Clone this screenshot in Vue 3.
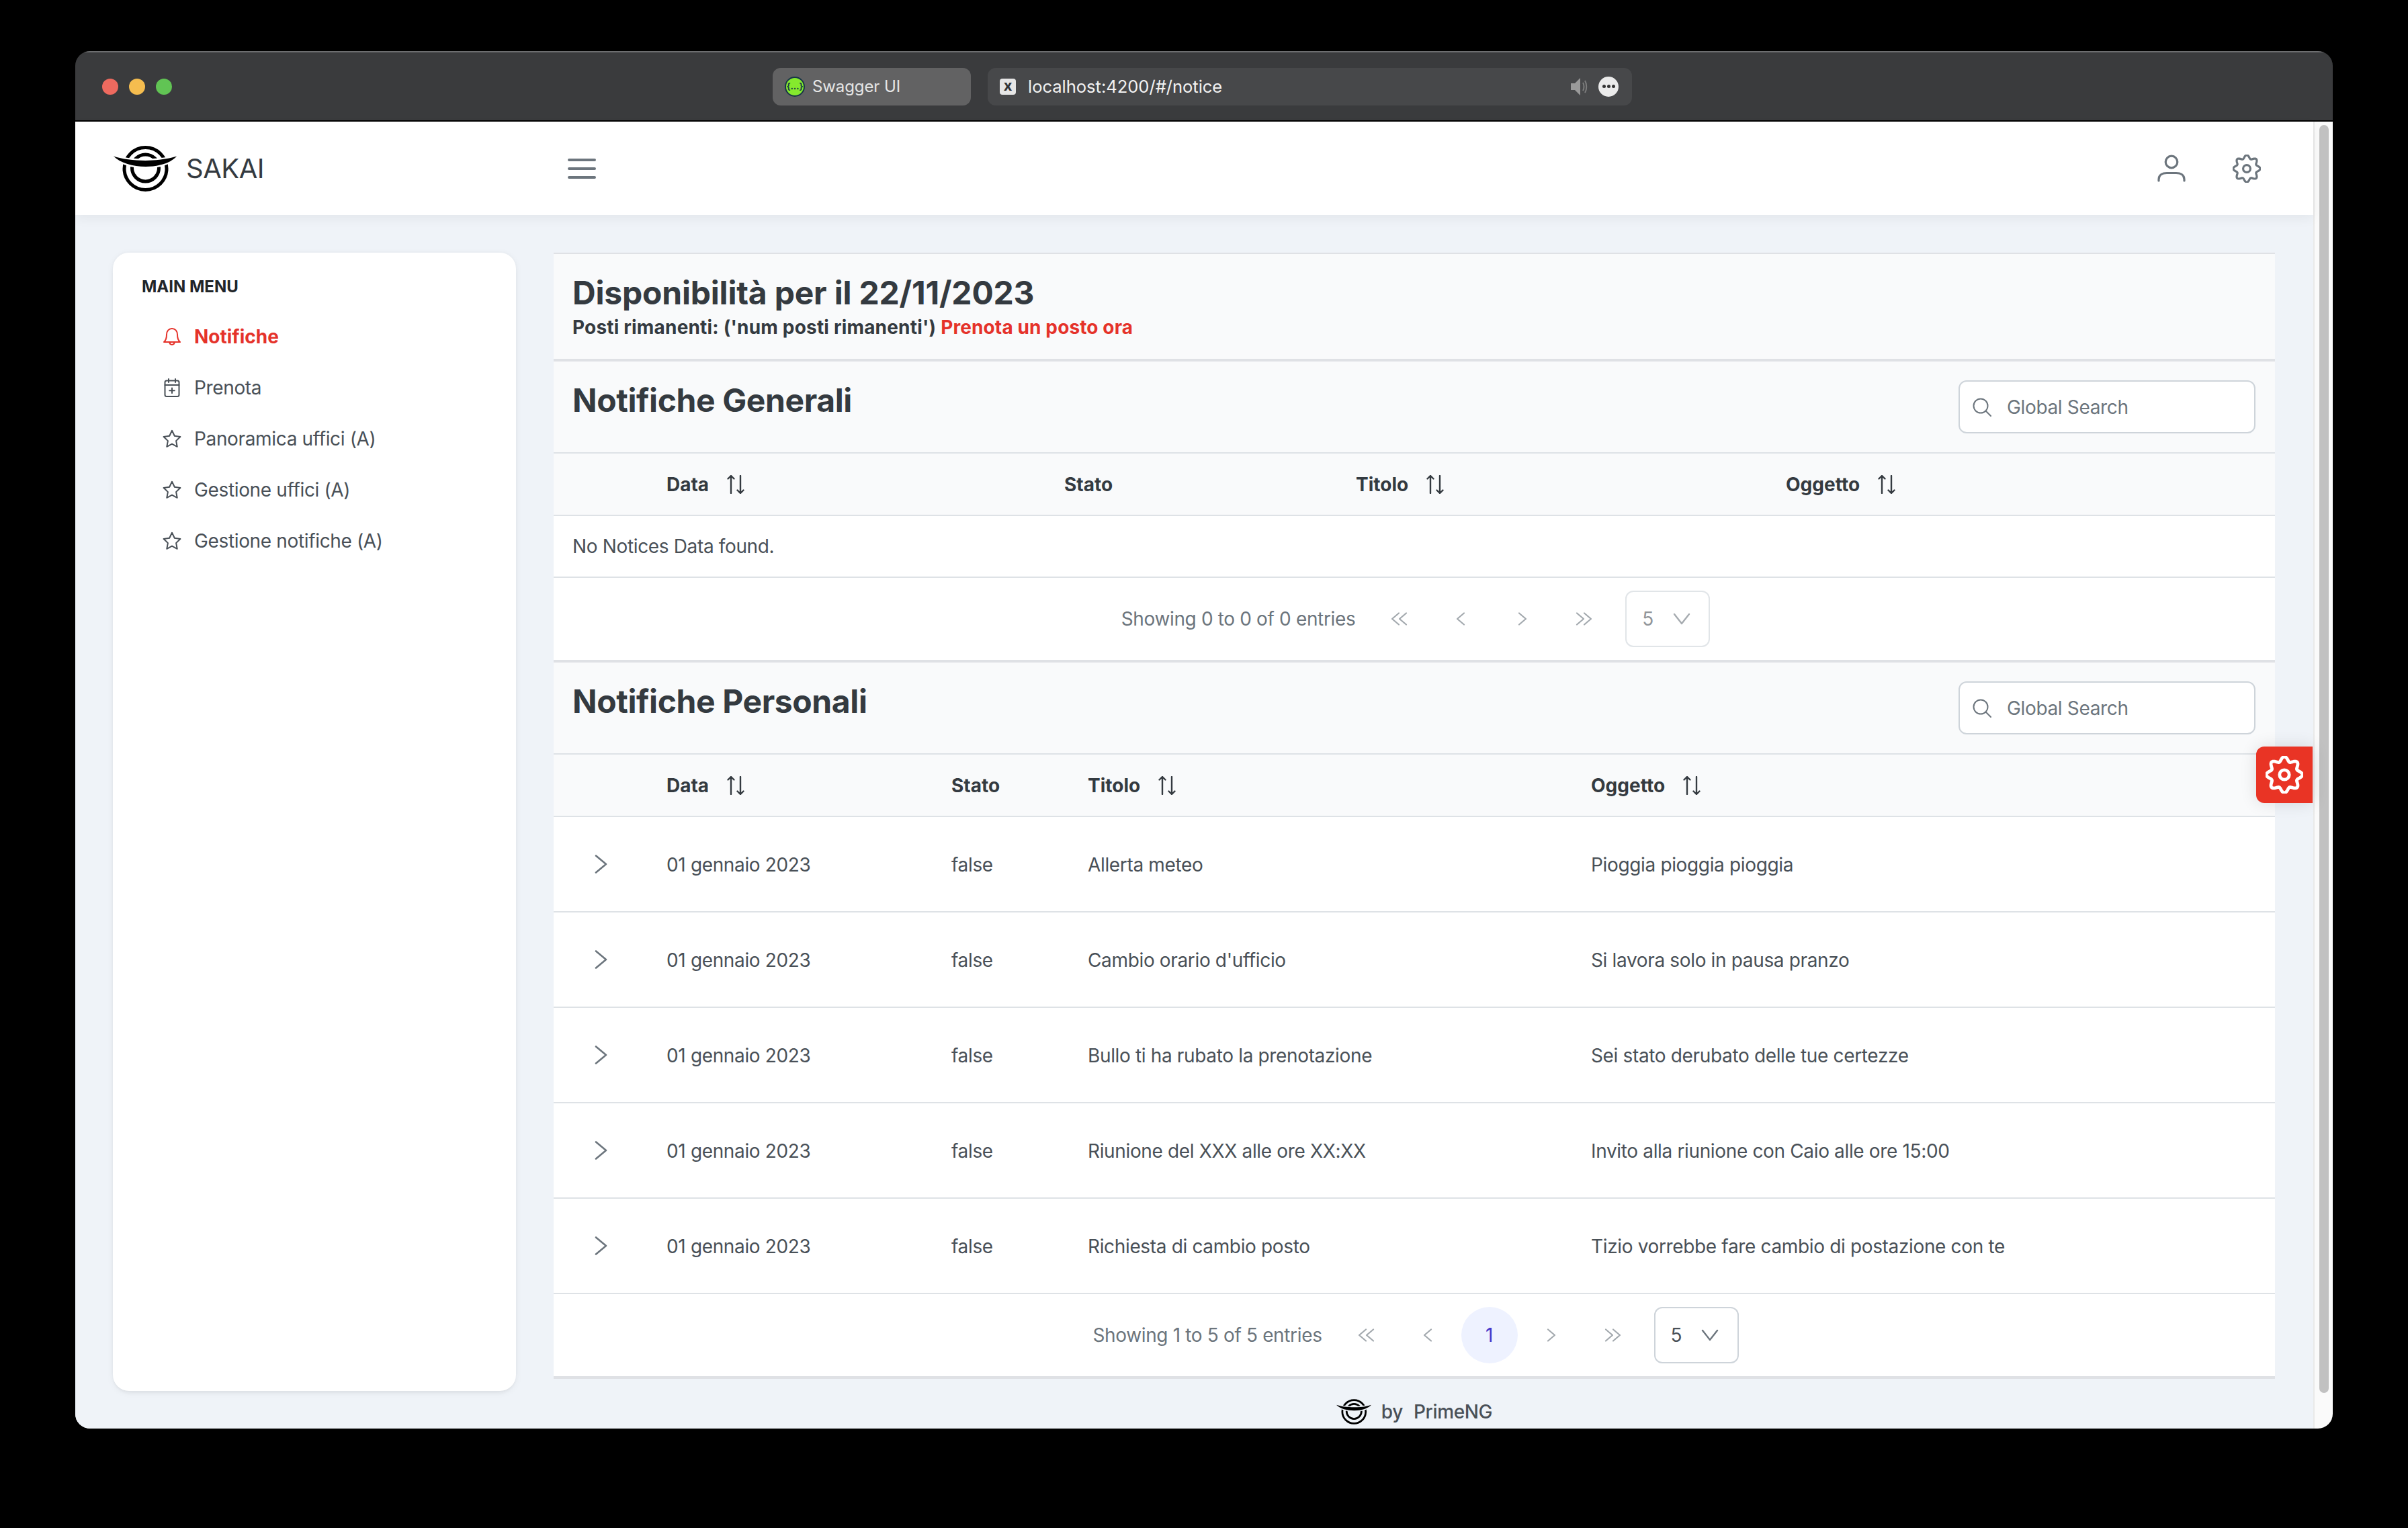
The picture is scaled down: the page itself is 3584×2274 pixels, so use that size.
<template>
  <div class="screen">
    <!-- shared icons -->
    <svg class="defs" aria-hidden="true">
      <symbol id="i-logo" viewBox="0 0 94 68">
        <circle class="ring" cx="47.5" cy="34" r="31.5" />
        <circle class="ring" cx="47.5" cy="33" r="20" />
        <path class="smile" d="M0 15.5 C25 24 70 24 94 15.5 C76 36 20 36 0 15.5Z" />
      </symbol>
      <symbol id="i-gear" viewBox="0 0 42 42">
        <path :d="gearPath" />
        <circle cx="21" cy="21" r="5.4" />
      </symbol>
      <symbol id="i-user" viewBox="0 0 42 42">
        <circle cx="21" cy="11" r="8.8" />
        <path d="M2 39 V37 C2 30 8 27.5 14 27.5 H28 C34 27.5 40 30 40 37 V39" />
      </symbol>
      <symbol id="i-bell" viewBox="0 0 28 28">
        <path d="M2 22 C5 19.5 6 16 6 11 C6 5.5 9.5 2 14 2 C18.5 2 22 5.5 22 11 C22 16 23 19.5 26 22 Z" />
        <path d="M10.5 22.5 C10.5 27 17.5 27 17.5 22.5" />
      </symbol>
      <symbol id="i-cal" viewBox="0 0 28 28">
        <rect x="3.5" y="3.5" width="21" height="23.5" rx="2.5" />
        <path d="M3.5 10 H24.5 M9 1 V6 M19 1 V6 M14 14.5 V22 M10.2 18.2 H17.8" />
      </symbol>
      <symbol id="i-star" viewBox="0 0 28 28">
        <path d="M14 1.8 L17.8 9.8 L26.4 11 L20.1 17.1 L21.7 25.8 L14 21.6 L6.3 25.8 L7.9 17.1 L1.6 11 L10.2 9.8 Z" />
      </symbol>
      <symbol id="i-sort" viewBox="0 0 28 28">
        <path d="M7 27 V1 M2.5 5.5 L7 1 L11.5 5.5 M21 1 V27 M16.5 22.5 L21 27 L25.5 22.5" />
      </symbol>
      <symbol id="i-search" viewBox="0 0 28 28">
        <circle cx="12" cy="12" r="10.5" />
        <path d="M19.5 19.5 L27 27" />
      </symbol>
      <symbol id="i-expand" viewBox="0 0 28 28">
        <path d="M6 1.5 L21 14 L6 26.5" />
      </symbol>
      <symbol id="i-right" viewBox="0 0 28 28">
        <path d="M9 5.5 L19 14 L9 22.5" />
      </symbol>
      <symbol id="i-left" viewBox="0 0 28 28">
        <path d="M19 5.5 L9 14 L19 22.5" />
      </symbol>
      <symbol id="i-dleft" viewBox="0 0 28 28">
        <path d="M14 5.5 L4 14 L14 22.5 M25 5.5 L15 14 L25 22.5" />
      </symbol>
      <symbol id="i-dright" viewBox="0 0 28 28">
        <path d="M3 5.5 L13 14 L3 22.5 M14 5.5 L24 14 L14 22.5" />
      </symbol>
      <symbol id="i-down" viewBox="0 0 28 28">
        <path d="M3 7 L14 21 L25 7" />
      </symbol>
    </svg>

    <div class="window">
      <div class="titlebar">
        <div class="lights">
          <span class="light red"></span>
          <span class="light yellow"></span>
          <span class="light green"></span>
        </div>
        <div class="tab tab-swagger">
          <span class="favicon-swagger">{…}</span>
          <span>Swagger UI</span>
        </div>
        <div class="tab tab-url">
          <span class="favicon-close">x</span>
          <span class="url">localhost:4200/#/notice</span>
          <svg class="speaker" viewBox="0 0 26 30">
            <path class="speaker-body" d="M1 10 H7 L15 2 V28 L7 20 H1 Z" />
            <path class="speaker-wave" d="M19 9 C21 12 21 18 19 21 M22 6 C25 11 25 19 22 24" />
          </svg>
          <span class="more"><i></i><i></i><i></i></span>
        </div>
      </div>

      <div class="page">
        <div class="app">
          <header class="topbar">
            <div class="brand">
              <svg class="logo"><use href="#i-logo" /></svg>
              <span>SAKAI</span>
            </div>
            <button class="bar-btn">
              <span class="burger"><i></i><i></i><i></i></span>
            </button>
            <div class="topbar-right">
              <button class="bar-btn"><svg class="ic bar-ic"><use href="#i-user" /></svg></button>
              <button class="bar-btn"><svg class="ic bar-ic"><use href="#i-gear" /></svg></button>
            </div>
          </header>

          <div class="layout">
            <aside class="sidebar">
              <div class="menu-title">MAIN MENU</div>
              <ul class="menu">
                <li v-for="item in menu" :key="item.label" class="menu-item" :class="{ active: item.active }">
                  <svg class="ic menu-ic"><use :href="'#' + item.icon" /></svg>
                  <span>{{ item.label }}</span>
                </li>
              </ul>
            </aside>

            <main class="content">
              <section class="intro">
                <h2>Disponibilità per il 22/11/2023</h2>
                <p>Posti rimanenti: ('num posti rimanenti') <a>Prenota un posto ora</a></p>
              </section>

              <section v-for="table in tables" :key="table.title" class="datatable">
                <div class="dt-header">
                  <h3>{{ table.title }}</h3>
                  <label class="search">
                    <svg class="ic search-ic"><use href="#i-search" /></svg>
                    <span>Global Search</span>
                  </label>
                </div>
                <table>
                  <colgroup>
                    <col v-for="c in 5" :key="c" :class="table.cols + '-' + c" />
                  </colgroup>
                  <thead>
                    <tr>
                      <th></th>
                      <th v-for="h in heads" :key="h.label">
                        <span class="th-in">
                          {{ h.label }}
                          <svg v-if="h.sort" class="ic sort-ic"><use href="#i-sort" /></svg>
                        </span>
                      </th>
                    </tr>
                  </thead>
                  <tbody>
                    <tr v-if="!table.rows.length">
                      <td colspan="5" class="empty">No Notices Data found.</td>
                    </tr>
                    <tr v-for="row in table.rows" :key="row.titolo" class="row">
                      <td class="expander"><svg class="ic expander-ic"><use href="#i-expand" /></svg></td>
                      <td>01 gennaio 2023</td>
                      <td>false</td>
                      <td>{{ row.titolo }}</td>
                      <td>{{ row.oggetto }}</td>
                    </tr>
                  </tbody>
                </table>
                <div class="paginator" :class="{ off: !table.rows.length }">
                  <span class="current">{{ table.summary }}</span>
                  <span class="pg-btn"><svg class="ic pg-ic"><use href="#i-dleft" /></svg></span>
                  <span class="pg-btn"><svg class="ic pg-ic"><use href="#i-left" /></svg></span>
                  <span v-if="table.rows.length" class="pg-btn pg-page">1</span>
                  <span class="pg-btn"><svg class="ic pg-ic"><use href="#i-right" /></svg></span>
                  <span class="pg-btn"><svg class="ic pg-ic"><use href="#i-dright" /></svg></span>
                  <span class="pg-size">
                    <span>5</span>
                    <svg class="ic pg-down"><use href="#i-down" /></svg>
                  </span>
                </div>
              </section>

              <footer class="footer">
                <svg class="footer-logo"><use href="#i-logo" /></svg>
                <span class="by">by</span>
                <span class="prime">PrimeNG</span>
              </footer>
            </main>

            <button class="config"><svg class="ic config-ic"><use href="#i-gear" /></svg></button>
          </div>
        </div>

        <div class="scrollbar"><div class="thumb"></div></div>
      </div>
    </div>
  </div>
</template>

<script setup>
const menu = [
  { label: 'Notifiche', icon: 'i-bell', active: true },
  { label: 'Prenota', icon: 'i-cal' },
  { label: 'Panoramica uffici (A)', icon: 'i-star' },
  { label: 'Gestione uffici (A)', icon: 'i-star' },
  { label: 'Gestione notifiche (A)', icon: 'i-star' }
]

const heads = [
  { label: 'Data', sort: true },
  { label: 'Stato', sort: false },
  { label: 'Titolo', sort: true },
  { label: 'Oggetto', sort: true }
]

const tables = [
  {
    title: 'Notifiche Generali',
    cols: 'gen',
    summary: 'Showing 0 to 0 of 0 entries',
    rows: []
  },
  {
    title: 'Notifiche Personali',
    cols: 'per',
    summary: 'Showing 1 to 5 of 5 entries',
    rows: [
      { titolo: 'Allerta meteo', oggetto: 'Pioggia pioggia pioggia' },
      { titolo: "Cambio orario d'ufficio", oggetto: 'Si lavora solo in pausa pranzo' },
      { titolo: 'Bullo ti ha rubato la prenotazione', oggetto: 'Sei stato derubato delle tue certezze' },
      { titolo: 'Riunione del XXX alle ore XX:XX', oggetto: 'Invito alla riunione con Caio alle ore 15:00' },
      { titolo: 'Richiesta di cambio posto', oggetto: 'Tizio vorrebbe fare cambio di postazione con te' }
    ]
  }
]

// wavy outline of the cog, 8 lobes with one pointing up
const gearPath = (() => {
  const pts = []
  for (let i = 0; i < 160; i++) {
    const t = (i / 160) * Math.PI * 2
    const r = 17.6 + 2.5 * Math.cos(8 * t)
    pts.push((21 + r * Math.sin(t)).toFixed(2) + ' ' + (21 - r * Math.cos(t)).toFixed(2))
  }
  return 'M' + pts.join(' L') + ' Z'
})()
</script>

<style>
html, body {
  margin: 0;
  background: #000;
}
</style>

<style scoped>
* {
  box-sizing: border-box;
}

.screen {
  width: 3584px;
  height: 2274px;
  padding: 76px 112px 148px;
  background: #000;
  font-family: Inter, "Noto Sans", sans-serif;
  font-size: 28px;
  letter-spacing: -0.35px;
  color: #495057;
}

.defs {
  position: absolute;
  width: 0;
  height: 0;
}

.ring {
  fill: none;
  stroke: #000;
  stroke-width: 5;
}

.smile {
  fill: #000;
  stroke: var(--halo, #fff);
  stroke-width: 5;
  paint-order: stroke;
}

.ic {
  display: block;
  fill: none;
  stroke: currentColor;
  stroke-linecap: round;
  stroke-linejoin: round;
  flex: none;
}

.window {
  height: 100%;
  display: flex;
  flex-direction: column;
  border-radius: 22px;
  overflow: hidden;
}

.titlebar {
  height: 105px;
  flex: none;
  display: flex;
  align-items: center;
  background: #3a3b3d;
  border-top: 2px solid #6d6e70;
  border-bottom: 2px solid #000;
  position: relative;
}

.lights {
  display: flex;
  gap: 16px;
  padding-left: 40px;
  margin-right: 894px;
}

.light {
  width: 24px;
  height: 24px;
  border-radius: 50%;
}
.red { background: #ee6a5f; }
.yellow { background: #f5bd4f; }
.green { background: #61c454; }

.tab {
  height: 56px;
  display: flex;
  align-items: center;
  border-radius: 12px;
}

.tab-swagger {
  width: 295px;
  background: #626263;
  padding-left: 18px;
  gap: 11px;
  color: #e6e6e6;
  font-size: 24px;
  letter-spacing: -0.1px;
  margin-right: 25px;
}

.favicon-swagger {
  width: 30px;
  height: 30px;
  border-radius: 50%;
  background: #85ea2d;
  border: 2px solid #173646;
  color: #173646;
  font-size: 13px;
  font-weight: 700;
  line-height: 24px;
  text-align: center;
  white-space: nowrap;
  overflow: hidden;
}

.tab-url {
  width: 959px;
  background: #47484a;
  padding-left: 18px;
  color: #f2f2f2;
}

.favicon-close {
  width: 24px;
  height: 24px;
  border-radius: 4px;
  background: #e6e6e6;
  color: #333;
  font-size: 22px;
  font-weight: 700;
  line-height: 20px;
  text-align: center;
  margin-right: 18px;
}

.url {
  font-size: 25.6px;
  letter-spacing: -0.05px;
  flex: 1;
}

.speaker {
  width: 26px;
  height: 30px;
  margin-right: 16px;
}
.speaker-body { fill: #9a9a9a; }
.speaker-wave { fill: none; stroke: #7d7d7d; stroke-width: 2; }

.more {
  width: 30px;
  height: 30px;
  border-radius: 50%;
  background: #ebebeb;
  display: flex;
  align-items: center;
  justify-content: center;
  gap: 2px;
  margin-right: 20px;
}
.more i {
  width: 5px;
  height: 5px;
  border-radius: 50%;
  background: #333;
}

.page {
  flex: 1;
  min-height: 0;
  display: flex;
  background: #fafafa;
}

.app {
  width: 3331px;
  display: flex;
  flex-direction: column;
  background: #eff3f8;
}

.topbar {
  height: 139px;
  flex: none;
  display: flex;
  align-items: center;
  padding: 0 57px;
  background: #fff;
  box-shadow: 0 6px 16px rgba(0, 0, 0, 0.05);
  position: relative;
  z-index: 1;
}

.brand {
  width: 655px;
  display: flex;
  align-items: center;
  gap: 14px;
  font-size: 40px;
  letter-spacing: -0.5px;
  font-weight: 400;
  color: #343a40;
}

.logo {
  width: 94px;
  height: 68px;
}

.bar-btn {
  width: 84px;
  height: 84px;
  padding: 0;
  border: 0;
  background: none;
  color: #6c757d;
  display: flex;
  align-items: center;
  justify-content: center;
}

.bar-ic {
  width: 42px;
  height: 42px;
  stroke-width: 3.2;
}

.burger {
  width: 42px;
  display: flex;
  flex-direction: column;
  gap: 9px;
}
.burger i {
  height: 4px;
  border-radius: 2px;
  background: #6c757d;
}

.topbar-right {
  margin-left: auto;
  display: flex;
  gap: 28px;
}

.layout {
  flex: 1;
  min-height: 0;
  display: flex;
  align-items: flex-start;
  padding: 56px 57px 0 56px;
  gap: 56px;
  position: relative;
}

.sidebar {
  width: 600px;
  height: 1694px;
  flex: none;
  padding: 34px 43px;
  background: #fff;
  border-radius: 24px;
  box-shadow: 0 6px 4px -2px rgba(0, 0, 0, 0.03), 0 0 4px rgba(0, 0, 0, 0.03), 0 2px 12px rgba(0, 0, 0, 0.05);
}

.menu-title {
  font-size: 24px;
  line-height: 34px;
  letter-spacing: 0;
  font-weight: 700;
  color: #212529;
  margin-bottom: 19px;
}

.menu {
  list-style: none;
  margin: 0;
  padding: 0 0 0 31px;
}

.menu-item {
  height: 76px;
  display: flex;
  align-items: center;
  gap: 19px;
  color: #495057;
}

.menu-item.active {
  color: #e5322a;
  font-weight: 700;
  letter-spacing: 0;
}

.menu-ic {
  width: 28px;
  height: 28px;
  stroke-width: 2;
}

.content {
  width: 2562px;
  flex: none;
}

.intro {
  padding: 28px 28px 26px;
  background: #f9fafb;
  border-top: 2px solid #dfe1e5;
  border-bottom: 4px solid #dfe1e5;
}

.intro h2 {
  margin: 0;
  font-size: 48px;
  line-height: 60px;
  letter-spacing: -0.2px;
  font-weight: 700;
  color: #343a40;
}

.intro p {
  margin: 0;
  line-height: 42px;
  letter-spacing: 0.18px;
  font-weight: 700;
  color: #343a40;
}

.intro a {
  color: #e5322a;
  letter-spacing: 0.12px;
}

.datatable {
  background: #fff;
  border-bottom: 4px solid #dfe1e5;
}

.dt-header {
  display: flex;
  justify-content: space-between;
  align-items: flex-start;
  padding: 28px 29px 28px 28px;
  background: #f9fafb;
  border-bottom: 2px solid #dee2e6;
}

.dt-header h3 {
  margin: 0;
  font-size: 48px;
  line-height: 60px;
  letter-spacing: -0.4px;
  font-weight: 700;
  color: #343a40;
}

.search {
  width: 442px;
  height: 79px;
  display: flex;
  align-items: center;
  gap: 23px;
  padding-left: 19px;
  background: #fff;
  border: 2px solid #ced4da;
  border-radius: 12px;
  color: #6c757d;
}

.search-ic {
  width: 28px;
  height: 28px;
  stroke-width: 2;
}

table {
  width: 100%;
  table-layout: fixed;
  border-collapse: collapse;
}

.gen-1, .per-1 { width: 140px; }
.gen-2 { width: 592px; }
.gen-3 { width: 434px; }
.gen-4 { width: 640px; }
.per-2 { width: 424px; }
.per-3 { width: 203px; }
.per-4 { width: 749px; }

th {
  height: 92px;
  padding: 0 28px;
  text-align: left;
  background: #f9fafb;
  border-bottom: 2px solid #dee2e6;
  font-weight: 700;
  letter-spacing: 0;
  color: #343a40;
}

.th-in {
  display: flex;
  align-items: center;
  gap: 26px;
}

.sort-ic {
  width: 28px;
  height: 28px;
  stroke-width: 2.4;
}

td {
  padding: 0 28px;
  border-bottom: 2px solid #dee2e6;
  color: #495057;
}

.empty {
  height: 92px;
}

.row td {
  height: 142px;
  padding-top: 1px;
}

.row .expander {
  padding: 0 0 0 57px;
}

.expander-ic {
  width: 28px;
  height: 28px;
  stroke-width: 2.6;
  color: #6c757d;
}

.paginator {
  height: 122px;
  padding-left: 4px;
  display: flex;
  align-items: center;
  justify-content: center;
  color: #6c757d;
}

.current {
  margin-right: 19px;
}

.pg-btn {
  width: 84px;
  height: 84px;
  margin: 0 4px;
  display: flex;
  align-items: center;
  justify-content: center;
  border-radius: 50%;
  color: #a3a9ae;
}

.pg-ic {
  width: 28px;
  height: 28px;
  stroke-width: 2.2;
}

.pg-page {
  background: #eef2ff;
  color: #4338ca;
}

.pg-size {
  width: 126px;
  height: 84px;
  margin-left: 15px;
  padding-left: 23px;
  display: flex;
  align-items: center;
  gap: 28px;
  background: #fff;
  border: 2px solid #ced4da;
  border-radius: 12px;
  color: #495057;
}

.pg-down {
  width: 28px;
  height: 28px;
  stroke-width: 2.4;
  color: #6c757d;
}

.off .pg-size {
  opacity: 0.6;
}

.footer {
  display: flex;
  align-items: center;
  justify-content: center;
  gap: 15px;
  padding-top: 30px;
  --halo: #eff3f8;
  font-weight: 500;
}

.footer-logo {
  width: 52px;
  height: 38px;
}

.by {
  margin-right: 1px;
}

.config {
  position: absolute;
  top: 791px;
  right: 1px;
  width: 84px;
  height: 84px;
  padding: 0;
  border: 0;
  border-radius: 12px 0 0 12px;
  background: #e93425;
  color: #fff;
  display: flex;
  align-items: center;
  justify-content: center;
  box-shadow: 0 0 24px rgba(0, 0, 0, 0.12);
}

.config-ic {
  width: 56px;
  height: 56px;
  stroke-width: 3.6;
}

.scrollbar {
  flex: 1;
  padding: 5px 6px 0 7px;
  border-left: 2px solid #e9e9e9;
}

.thumb {
  height: 1887px;
  border-radius: 8px;
  background: #c1c1c1;
}
</style>
